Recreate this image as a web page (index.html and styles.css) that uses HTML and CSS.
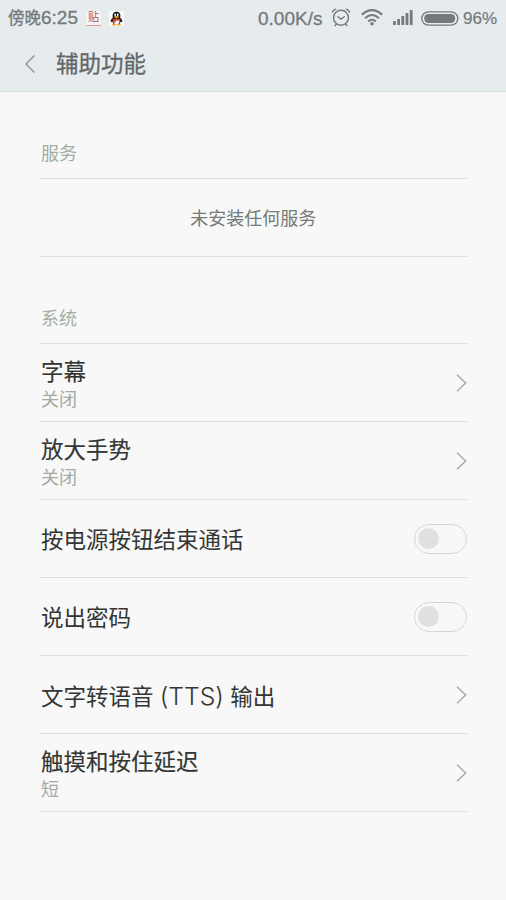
FILE: index.html
```html
<!DOCTYPE html>
<html lang="zh-CN">
<head>
<meta charset="utf-8">
<title>辅助功能</title>
<link rel="stylesheet" href="styles.css">
</head>
<body>
<header class="top">
  <div class="status">
    <span class="clock">傍晚<span class="digits">6:25</span></span>
    <span class="tieba">贴</span>
    <svg class="qq" width="15" height="15" viewBox="0 0 15 15">
      <rect width="15" height="15" rx="1" fill="#fafafa"/>
      <path d="M3.4 7Q1 9.5 2 11.2L3.3 10.5 4.5 13h6l1.2-2.5 1.3.7Q14 9.5 11.6 7z" fill="#151515"/>
      <ellipse cx="7.5" cy="5" rx="3.9" ry="4.3" fill="#151515"/>
      <ellipse cx="7.5" cy="10.6" rx="3" ry="2.8" fill="#fff"/>
      <ellipse cx="6.2" cy="3.7" rx=".9" ry="1.2" fill="#fff"/>
      <ellipse cx="8.8" cy="3.7" rx=".9" ry="1.2" fill="#fff"/>
      <ellipse cx="7.5" cy="6" rx="2.5" ry=".9" fill="#f3a51e"/>
      <path d="M3.6 7.3Q7.5 9.3 11.4 7.3v1.5Q9 10 6.5 9.6v1.8H4.8V9.3L3.4 8.6z" fill="#dc3026"/>
      <ellipse cx="5.2" cy="13.6" rx="2.2" ry=".9" fill="#efa026"/>
      <ellipse cx="9.8" cy="13.6" rx="2.2" ry=".9" fill="#efa026"/>
    </svg>
    <span class="speed">0.00K/s</span>
    <svg class="alarm" width="20" height="20" viewBox="0 0 20 20">
      <g fill="none" stroke="#747a79" stroke-width="1.4" stroke-linecap="round">
        <circle cx="10" cy="9.8" r="7.5"/>
        <path d="M6.7 8.7 10 11.1 13.3 8.7M1.4 4.1Q2.5 2 4.8 1.2M18.6 4.1Q17.5 2 15.2 1.2M5.2 16.2 4 17.6M14.8 16.2 16 17.6"/>
      </g>
    </svg>
    <svg class="wifi" width="22" height="18" viewBox="0 0 22 18">
      <g fill="none" stroke="#747a79" stroke-width="2">
        <path d="M.8 5.7Q11-3.5 21.2 5.7M4 9.2Q11 2.9 18 9.2M7.2 12.5Q11 9 14.8 12.5"/>
      </g>
      <circle cx="11" cy="14.7" r="1.8" fill="#747a79"/>
    </svg>
    <svg class="signal" width="20" height="16" viewBox="0 0 20 16" fill="#747a79">
      <rect x="0" y="11" width="2.8" height="4" rx=".6"/>
      <rect x="4.2" y="9" width="2.8" height="6" rx=".6"/>
      <rect x="8.4" y="6" width="2.8" height="9" rx=".6"/>
      <rect x="12.6" y="3" width="2.8" height="12" rx=".6"/>
      <rect x="16.8" y="0" width="2.8" height="15" rx=".6"/>
    </svg>
    <svg class="battery" width="38" height="15" viewBox="0 0 38 15">
      <rect x=".8" y=".8" width="36" height="13.4" rx="6.7" fill="none" stroke="#747a79" stroke-width="1.3"/>
      <rect x="3.2" y="3.1" width="31" height="8.8" rx="4.2" fill="#747a79"/>
    </svg>
    <span class="percent">96%</span>
  </div>
  <div class="bar">
    <svg class="back" width="12" height="20" viewBox="0 0 12 20"><path d="M10.5 1.5 2 10l8.5 8.5" fill="none" stroke="#969c9b" stroke-width="1.6"/></svg>
    <h1>辅助功能</h1>
  </div>
</header>
<main>
  <h2>服务</h2>
  <div class="row empty">未安装任何服务</div>
  <h2>系统</h2>
  <div class="row"><div class="label double"><b>字幕</b><small>关闭</small></div><svg class="more" width="12" height="20" viewBox="0 0 12 20"><path d="M2 1.8 10.7 10 2 18.2"/></svg></div>
  <div class="row"><div class="label double"><b>放大手势</b><small>关闭</small></div><svg class="more" width="12" height="20" viewBox="0 0 12 20"><path d="M2 1.8 10.7 10 2 18.2"/></svg></div>
  <div class="row"><div class="label">按电源按钮结束通话</div><span class="switch"></span></div>
  <div class="row"><div class="label">说出密码</div><span class="switch"></span></div>
  <div class="row"><div class="label">文字转语音 <span class="latin">(TTS)</span> 输出</div><svg class="more" width="12" height="20" viewBox="0 0 12 20"><path d="M2 1.8 10.7 10 2 18.2"/></svg></div>
  <div class="row"><div class="label double"><b>触摸和按住延迟</b><small>短</small></div><svg class="more" width="12" height="20" viewBox="0 0 12 20"><path d="M2 1.8 10.7 10 2 18.2"/></svg></div>
</main>
</body>
</html>
```
FILE: styles.css
```css
* { box-sizing: border-box; }
body {
  margin: 0;
  height: 900px;
  overflow: hidden;
  background: #f8f8f8;
  color: #333633;
  font-family: "Liberation Sans", "Noto Sans CJK SC", sans-serif;
}
.top {
  height: 92px;
  background: #e6ebee;
  border-bottom: 1px solid #d7dcdd;
}
.status {
  display: flex;
  align-items: center;
  height: 36px;
  padding-left: 8px;
  color: #747a79;
  white-space: nowrap;
  line-height: 36px;
}
.clock {
  width: 78px;
  font-size: 16.5px;
  -webkit-text-stroke: .3px;
}
.digits { font-size: 19px; }
.tieba {
  width: 15px;
  height: 15px;
  background: #f6f3f2;
  border-bottom: 1px solid #dc9b92;
  color: #b5554e;
  font-size: 11px;
  line-height: 13px;
  text-align: center;
}
.qq { margin-left: 8px; }
.speed {
  width: 73px;
  margin-left: 134px;
  padding-top: 1px;
  font-size: 19px;
  -webkit-text-stroke: .3px;
}
.wifi { margin-left: 10px; }
.signal { margin-left: 10px; }
.battery { margin-left: 8px; }
.percent {
  margin-left: 4px;
  padding-top: 1px;
  font-size: 17px;
  -webkit-text-stroke: .2px;
}
.bar {
  display: flex;
  align-items: center;
  height: 55px;
  padding-left: 24px;
}
h1 {
  margin: 0 0 0 20px;
  padding-top: 3px;
  color: #626867;
  font-size: 22.5px;
  font-weight: 400;
  line-height: 32px;
  -webkit-text-stroke: .3px;
}
main { padding: 0 39.5px 0 40px; }
h2 {
  height: 87px;
  margin: 0;
  padding: 48px 0 0 1px;
  border-bottom: 1px solid #dcdedd;
  color: #a2ada2;
  font-size: 18px;
  font-weight: 400;
  line-height: 28px;
}
.row {
  display: flex;
  align-items: center;
  justify-content: space-between;
  height: 78px;
  padding-left: 1px;
  border-bottom: 1px solid #dcdedd;
}
.empty {
  justify-content: center;
  padding: 0 0 2px;
  color: #757b75;
  font-size: 18px;
}
.label {
  padding-top: 4px;
  font-size: 22.5px;
  line-height: 32px;
}
.double { padding-top: 8px; }
.label b, .label small { display: block; }
.label b {
  font-weight: 400;
  line-height: 28px;
  -webkit-text-stroke: .15px;
}
.label small {
  color: #a2aaa2;
  font-size: 18px;
  line-height: 27px;
}
.latin {
  font-family: Inter, "Liberation Sans", sans-serif;
  font-size: 24.7px;
  font-weight: 300;
}
.more path {
  fill: none;
  stroke: #a9acaa;
  stroke-width: 1.5;
}
.switch {
  display: flex;
  align-items: center;
  width: 53px;
  height: 30px;
  padding-left: 3px;
  border: 1px solid #d2d9d2;
  border-radius: 15px;
}
.switch::before {
  content: "";
  width: 21px;
  height: 21px;
  border-radius: 50%;
  background: #dfe1df;
}
```
